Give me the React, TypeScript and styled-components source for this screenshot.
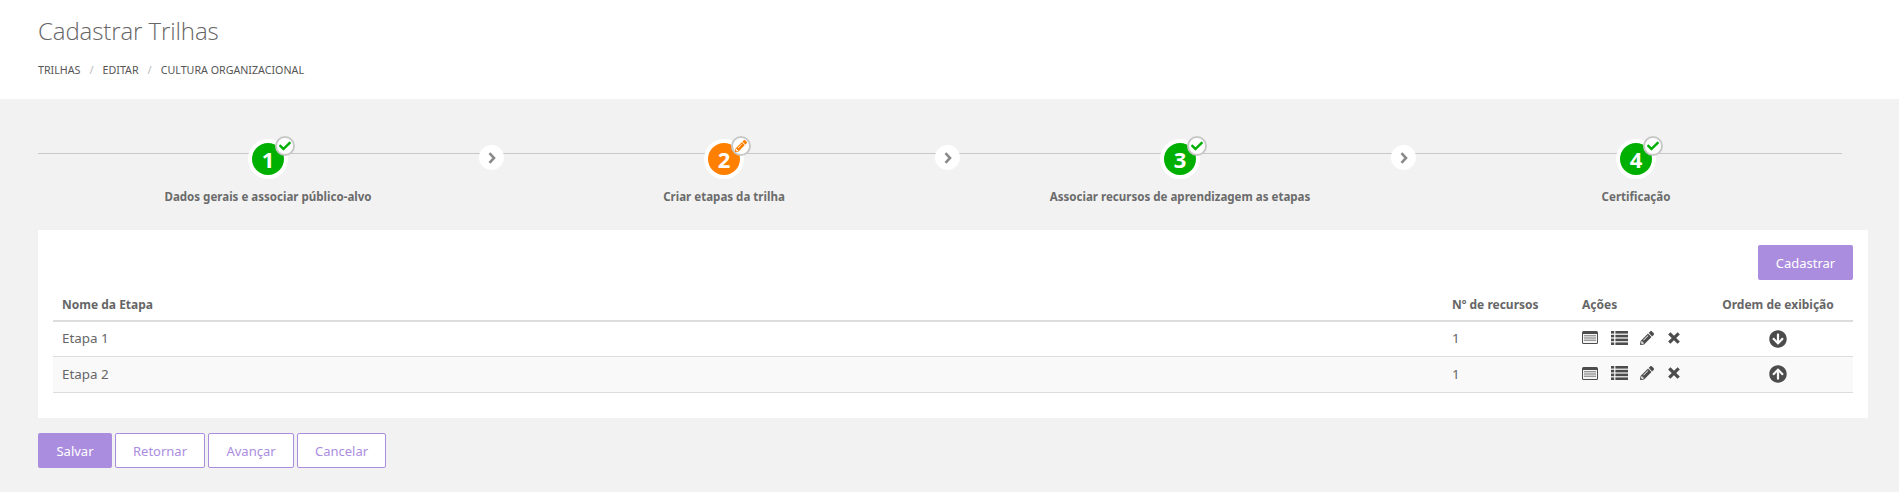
import React from "react";
import styled, { createGlobalStyle } from "styled-components";
import { FaArrowCircleDown, FaArrowCircleUp, FaCheck, FaPencilAlt } from "react-icons/fa";

const Global = createGlobalStyle`
  html, body { margin: 0; padding: 0; background: #f2f2f2; }
  body { font-family: "Noto Sans", "Open Sans", sans-serif; color: #666; }
`;
const Page = styled.div`height: 492px; overflow: hidden; background: #f2f2f2;`;
const Header = styled.header`
  background: #fff; height: 99px; box-sizing: border-box; padding: 16px 38px 0;
`;
const Title = styled.h1`
  margin: 0; font: 300 24px/30px "Open Sans", sans-serif; color: #666; letter-spacing: -0.1px;
`;
const Crumbs = styled.nav`
  display: flex; margin-top: 17px; font-size: 10.7px; line-height: 14px; color: #555; text-transform: uppercase;
`;
const Sep = styled.span`color: #bbb; margin: 0 9px; font-size: 11px;`;
const Main = styled.main`padding: 40px 31px 0 38px;`;
const Steps = styled.div`
  position: relative; display: grid; grid-template-columns: repeat(4, 456px); padding-left: 2px; height: 91px;
  &::before {
    content: ""; position: absolute; left: 0; top: 14px; width: 1804px; height: 1px; background: #c8c8c8;
  }
`;
const Step = styled.div`
  position: relative; display: flex; flex-direction: column; align-items: center;
`;
const Ring = styled.div<{ $c: string }>`
  position: relative; width: 32px; height: 32px; border-radius: 50%; background: ${p => p.$c};
  border: 4px solid #fff; display: flex; align-items: center; justify-content: center;
  color: #fff; font: 700 22px/1 "Noto Sans", sans-serif;
`;
const Badge = styled.span<{ $c: string }>`
  position: absolute; left: 23px; top: -7px; width: 16px; height: 16px; border-radius: 50%;
  background: #fff; border: 2px solid #c8c8c8; display: flex; align-items: center; justify-content: center;
  color: ${p => p.$c}; font-size: 12px;
`;
const StepLabel = styled.div`
  margin-top: 10px; font-size: 11.55px; line-height: 16px; font-weight: 700; color: #6b6b6b; white-space: nowrap;
`;
const Arrow = styled.span`
  position: absolute; right: -8px; top: 6px; width: 25px; height: 25px; border-radius: 50%; background: #fff;
  display: flex; align-items: center; justify-content: center;
`;
const Panel = styled.section`
  background: #fff; height: 188px; box-sizing: border-box; padding: 15px 15px 0;
`;
const PanelTop = styled.div`display: flex; justify-content: flex-end; height: 46px;`;
const Solid = styled.button<{ $w: number }>`
  height: 35px; padding: 0; border: 0; border-radius: 2px; background: #ab8ddf; color: #fff;
  font: 400 13px "Noto Sans", sans-serif; width: ${p => p.$w}px;
`;
const Outline = styled.button<{ $w: number }>`
  height: 35px; padding: 0; border: 1px solid #ab8ddf; border-radius: 2px; background: #fff; color: #ab8ddf;
  font: 400 13px "Noto Sans", sans-serif; width: ${p => p.$w}px;
`;
const Table = styled.table`
  width: 1800px; border-collapse: separate; border-spacing: 0; table-layout: fixed; font-size: 13.4px;
  tbody tr:first-child td { height: 35px; }
`;
const Th = styled.th<{ $center?: boolean }>`
  height: 31px; padding: 0 9px 3px; box-sizing: border-box; text-align: ${p => (p.$center ? "center" : "left")};
  font-size: 12px; font-weight: 700; color: #666; border-bottom: 2px solid #ddd; white-space: nowrap;
`;
const Tr = styled.tr<{ $alt?: boolean }>`background: ${p => (p.$alt ? "#f9f9f9" : "#fff")};`;
const Td = styled.td<{ $center?: boolean }>`
  height: 36px; padding: 0 9px 2px; box-sizing: border-box; border-bottom: 1px solid #ddd; color: #666;
  text-align: ${p => (p.$center ? "center" : "left")};
`;
const Actions = styled.div`display: flex; align-items: center; color: #4c4c4c; height: 16px; margin-top: -1px;`;
const ActionSlot = styled.span<{ $w: number }>`display: flex; width: ${p => p.$w}px; align-items: center;`;
const OrderIcon = styled.span`display: inline-flex; color: #4c4c4c; font-size: 18px; vertical-align: middle;`;
const Footer = styled.div`display: flex; gap: 3px; margin-top: 15px;`;

const ListAlt = () => (
  <svg width="16" height="13" viewBox="0 0 16 13">
    <rect width="16" height="13" rx="1.5" fill="#4c4c4c" />
    <rect x="1" y="3" width="14" height="9" fill="#f4f4f4" />
    <rect x="2" y="4" width="12" height="1.4" fill="#999" />
    <rect x="2" y="6.3" width="12" height="1.4" fill="#999" />
    <rect x="2" y="8.6" width="12" height="1.4" fill="#999" />
  </svg>
);
const ListIcon = () => (
  <svg width="17" height="14" viewBox="0 0 17 14" fill="#4c4c4c">
    {[0, 3.8, 7.6, 11.4].map(y => (
      <g key={y}>
        <rect x="0" y={y} width="3.2" height="2.6" />
        <rect x="4.4" y={y} width="12.6" height="2.6" />
      </g>
    ))}
  </svg>
);
const TimesIcon = () => (
  <svg width="12" height="12" viewBox="0 0 12 12" stroke="#4c4c4c" strokeWidth="3.2" strokeLinecap="square">
    <path d="M2.4 2.4 9.6 9.6M9.6 2.4 2.4 9.6" />
  </svg>
);
const Chevron = () => (
  <svg width="8" height="12" viewBox="0 0 8 12" fill="none" stroke="#8a8a8a" strokeWidth="2.6">
    <path d="M1.5 1.2 6 6 1.5 10.8" />
  </svg>
);

const steps = [
  { n: 1, label: "Dados gerais e associar público-alvo", edit: false },
  { n: 2, label: "Criar etapas da trilha", edit: true },
  { n: 3, label: "Associar recursos de aprendizagem as etapas", edit: false },
  { n: 4, label: "Certificação", edit: false },
];

const ActionIcons = () => (
  <Actions>
    <ActionSlot $w={29}><ListAlt /></ActionSlot>
    <ActionSlot $w={29}><ListIcon /></ActionSlot>
    <ActionSlot $w={28}><FaPencilAlt size={14} /></ActionSlot>
    <ActionSlot $w={14}><TimesIcon /></ActionSlot>
  </Actions>
);

export default function App() {
  return (
    <Page>
      <Global />
      <Header>
        <Title>Cadastrar Trilhas</Title>
        <Crumbs>
          <span>Trilhas</span><Sep>/</Sep><span>Editar</span><Sep>/</Sep><span>Cultura Organizacional</span>
        </Crumbs>
      </Header>
      <Main>
        <Steps>
          {steps.map((s, i) => (
            <Step key={s.n}>
              <Ring $c={s.edit ? "#ff8000" : "#00b000"}>
                {s.n}
                <Badge $c={s.edit ? "#ff8000" : "#00b000"}>{s.edit ? <FaPencilAlt /> : <FaCheck />}</Badge>
              </Ring>
              <StepLabel>{s.label}</StepLabel>
              {i < 3 && <Arrow><Chevron /></Arrow>}
            </Step>
          ))}
        </Steps>
        <Panel>
          <PanelTop><Solid $w={95}>Cadastrar</Solid></PanelTop>
          <Table>
            <colgroup>
              <col style={{ width: 1390 }} /><col style={{ width: 130 }} /><col style={{ width: 130 }} /><col style={{ width: 150 }} />
            </colgroup>
            <thead>
              <tr><Th>Nome da Etapa</Th><Th>Nº de recursos</Th><Th>Ações</Th><Th $center>Ordem de exibição</Th></tr>
            </thead>
            <tbody>
              <Tr>
                <Td>Etapa 1</Td><Td>1</Td><Td><ActionIcons /></Td>
                <Td $center><OrderIcon><FaArrowCircleDown /></OrderIcon></Td>
              </Tr>
              <Tr $alt>
                <Td>Etapa 2</Td><Td>1</Td><Td><ActionIcons /></Td>
                <Td $center><OrderIcon><FaArrowCircleUp /></OrderIcon></Td>
              </Tr>
            </tbody>
          </Table>
        </Panel>
        <Footer>
          <Solid $w={74}>Salvar</Solid>
          <Outline $w={90}>Retornar</Outline>
          <Outline $w={86}>Avançar</Outline>
          <Outline $w={89}>Cancelar</Outline>
        </Footer>
      </Main>
    </Page>
  );
}
